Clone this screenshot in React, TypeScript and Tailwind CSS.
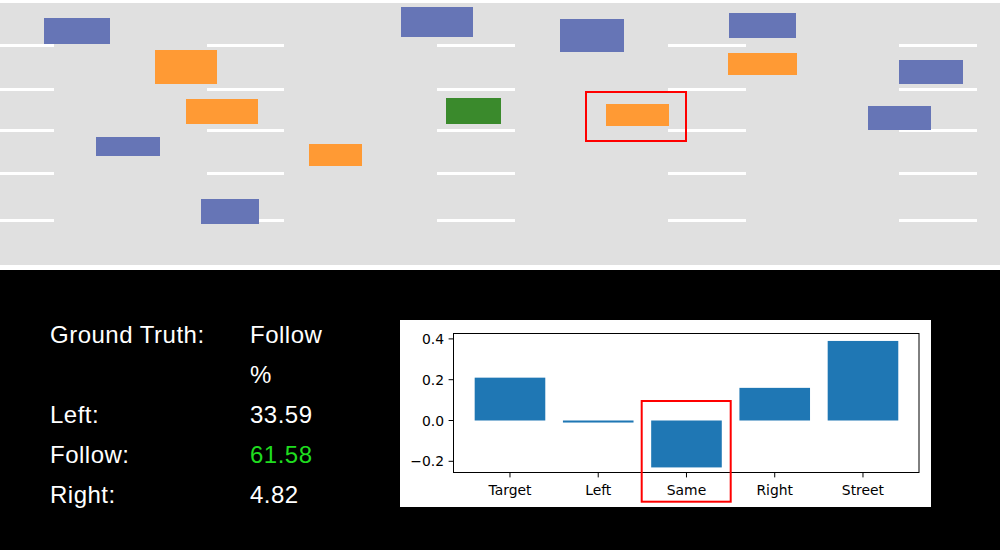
import React from "react";

type Car = { x: number; y: number; w: number; h: number; kind: "other" | "slow" | "ego" };

const CAR_COLORS: Record<Car["kind"], string> = {
  other: "#6675b6",
  slow: "#ff9a34",
  ego: "#3a8a2c",
};

const cars: Car[] = [
  { x: 44, y: 18, w: 66, h: 26, kind: "other" },
  { x: 155, y: 50, w: 62, h: 34, kind: "slow" },
  { x: 186, y: 99, w: 72, h: 25, kind: "slow" },
  { x: 96, y: 137, w: 64, h: 19, kind: "other" },
  { x: 309, y: 144, w: 53, h: 22, kind: "slow" },
  { x: 201, y: 199, w: 58, h: 25, kind: "other" },
  { x: 401, y: 7, w: 72, h: 30, kind: "other" },
  { x: 446, y: 98, w: 55, h: 26, kind: "ego" },
  { x: 560, y: 19, w: 64, h: 33, kind: "other" },
  { x: 606, y: 104, w: 63, h: 22, kind: "slow" },
  { x: 729, y: 13, w: 67, h: 25, kind: "other" },
  { x: 728, y: 53, w: 69, h: 22, kind: "slow" },
  { x: 899, y: 60, w: 64, h: 24, kind: "other" },
  { x: 868, y: 106, w: 63, h: 24, kind: "other" },
];

const laneLines = [44, 88, 129, 172, 219];
const dashes: [number, number][] = [
  [0, 54],
  [207, 284],
  [437, 515],
  [668, 746],
  [899, 977],
];

function Road() {
  return (
    <svg width={1000} height={262} viewBox="0 3 1000 262" className="block">
      <rect x={0} y={3} width={1000} height={262} fill="#e0e0e0" />
      {laneLines.map((y) =>
        dashes.map(([a, b]) => (
          <rect key={`${y}-${a}`} x={a} y={y} width={b - a} height={3} fill="#ffffff" />
        ))
      )}
      {cars.map((c, i) => (
        <rect key={i} x={c.x} y={c.y} width={c.w} height={c.h} fill={CAR_COLORS[c.kind]} />
      ))}
      <rect x={586} y={92} width={100} height={49} fill="none" stroke="#ff0000" strokeWidth={2} />
    </svg>
  );
}

const bars = [
  { label: "Target", value: 0.21 },
  { label: "Left", value: -0.01 },
  { label: "Same", value: -0.23 },
  { label: "Right", value: 0.16 },
  { label: "Street", value: 0.39 },
];

function ScoreChart() {
  const left = 53.5;
  const right = 519;
  const top = 13;
  const bottom = 153;
  const zero = 100.5;
  const scale = 204;
  const step = 88.25;
  const cx = (i: number) => left + (i + 0.64) * step;
  const vy = (v: number) => zero - v * scale;
  const font = "'DejaVu Sans', sans-serif";
  const yTicks = [
    { v: 0.4, t: "0.4" },
    { v: 0.2, t: "0.2" },
    { v: 0, t: "0.0" },
    { v: -0.2, t: "\u22120.2" },
  ];
  return (
    <svg width={531} height={187} viewBox="0 0 531 187" className="block">
      <rect x={0} y={0} width={531} height={187} fill="#ffffff" />
      {bars.map((b, i) => {
        const y0 = vy(Math.max(b.value, 0));
        const y1 = vy(Math.min(b.value, 0));
        return (
          <rect
            key={b.label}
            x={cx(i) - 0.4 * step}
            y={y0}
            width={0.8 * step}
            height={y1 - y0}
            fill="#1f77b4"
          />
        );
      })}
      <rect
        x={left}
        y={top + 0.5}
        width={right - left}
        height={bottom - top - 1}
        fill="none"
        stroke="#000"
        strokeWidth={1}
      />
      {yTicks.map((t) => (
        <g key={t.t}>
          <line x1={left - 4.9} x2={left} y1={vy(t.v)} y2={vy(t.v)} stroke="#000" strokeWidth={1} />
          <text
            x={44}
            y={vy(t.v)}
            textAnchor="end"
            dominantBaseline="central"
            fontFamily={font}
            fontSize={13.9}
            fill="#000"
          >
            {t.t}
          </text>
        </g>
      ))}
      {bars.map((b, i) => (
        <g key={b.label}>
          <line x1={cx(i)} x2={cx(i)} y1={bottom - 0.5} y2={bottom + 4.4} stroke="#000" strokeWidth={1} />
          <text x={cx(i)} y={174.5} textAnchor="middle" fontFamily={font} fontSize={13.9} fill="#000">
            {b.label}
          </text>
        </g>
      ))}
      <rect x={241.7} y={81} width={89} height={100.7} fill="none" stroke="#ff0000" strokeWidth={2} />
    </svg>
  );
}

const rows: { label: string; value: string; highlight?: boolean }[] = [
  { label: "Ground Truth:", value: "Follow" },
  { label: "", value: "%" },
  { label: "Left:", value: "33.59" },
  { label: "Follow:", value: "61.58", highlight: true },
  { label: "Right:", value: "4.82" },
];

export default function App() {
  return (
    <div className="w-[1000px] h-[550px] bg-black flex flex-col overflow-hidden">
      <div className="bg-white pt-[3px] pb-[5px]">
        <Road />
      </div>
      <div className="flex items-start">
        <div
          className="ml-[50px] mt-[45px] grid grid-cols-[200px_150px] text-[24px] leading-[40px] tracking-[0.5px] text-white"
          style={{ fontFamily: "'Liberation Sans', Arial, sans-serif" }}
        >
          {rows.map((r, i) => (
            <React.Fragment key={i}>
              <div className="h-[40px] whitespace-nowrap">{r.label}</div>
              <div className={`h-[40px] whitespace-nowrap ${r.highlight ? "text-[#1fdc1f]" : "text-white"}`}>
                {r.value}
              </div>
            </React.Fragment>
          ))}
        </div>
        <div className="mt-[50px]">
          <ScoreChart />
        </div>
      </div>
    </div>
  );
}
